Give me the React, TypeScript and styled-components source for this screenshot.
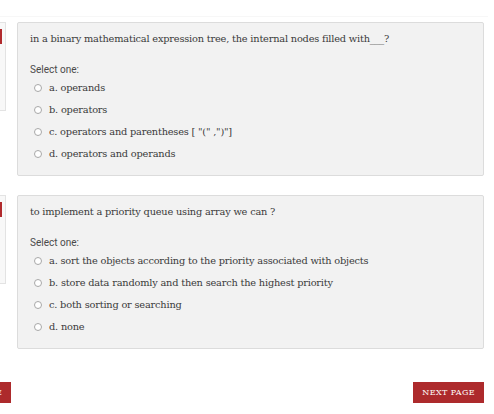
import { FC } from 'react'
import styled, { createGlobalStyle } from 'styled-components'

const GlobalStyle = createGlobalStyle`
  html, body {
    margin: 0;
    padding: 0;
    background: #fff;
  }
`

type Question = {
  id: string
  text: string
  options: string[]
}

const questions: Question[] = [
  {
    id: 'q1',
    text: 'in a binary mathematical expression tree, the internal nodes filled with___?',
    options: [
      'a. operands',
      'b. operators',
      'c. operators and parentheses [ "(" ,")"]',
      'd. operators and operands',
    ],
  },
  {
    id: 'q2',
    text: 'to implement a priority queue using array we can ?',
    options: [
      'a. sort the objects according to the priority associated with objects',
      'b. store data randomly and then search the highest priority',
      'c. both sorting or searching',
      'd. none',
    ],
  },
]

const QuestionBlock: FC<{ question: Question }> = ({ question }) => (
  <Block>
    <InfoBox>
      <InfoMarker />
    </InfoBox>
    <Card>
      <QuestionText>{question.text}</QuestionText>
      <Prompt>Select one:</Prompt>
      <OptionList>
        {question.options.map((option) => (
          <OptionRow key={option}>
            <Radio />
            <OptionLabel>{option}</OptionLabel>
          </OptionRow>
        ))}
      </OptionList>
    </Card>
  </Block>
)

export default function App() {
  return (
    <>
      <GlobalStyle />
      <Page>
        <TopRule />
        <Questions>
          {questions.map((q) => (
            <QuestionBlock key={q.id} question={q} />
          ))}
        </Questions>
        <Nav>
          <PrevButton>PREVIOUS PAGE</PrevButton>
          <NavButton>NEXT PAGE</NavButton>
        </Nav>
      </Page>
    </>
  )
}

const Page = styled.div`
  width: 494px;
  height: 414px;
  overflow: hidden;
  padding-top: 16px;
  box-sizing: border-box;
`

const TopRule = styled.div`
  height: 1px;
  margin-right: 6px;
  background-color: #f7f7f7;
  margin-bottom: 5px;
`

const Questions = styled.div`
  display: flex;
  flex-direction: column;
  gap: 19px;
`

const Block = styled.div`
  display: flex;
  align-items: flex-start;
  gap: 11px;
`

const InfoBox = styled.div`
  width: 6px;
  height: 89px;
  border: 1px solid #e3e3e3;
  border-left: none;
  background-color: #f8f8f8;
  padding-top: 6px;
  box-sizing: border-box;
`

const InfoMarker = styled.div`
  width: 2px;
  height: 15px;
  background-color: #b12a2d;
`

const Card = styled.div`
  width: 467px;
  height: 154px;
  box-sizing: border-box;
  border: 1px solid #dcdcdc;
  border-radius: 2px;
  background-color: #f2f2f2;
  padding: 9px 12px 0;
`

const QuestionText = styled.div`
  font-family: 'DejaVu Serif', serif;
  font-size: 9.8px;
  line-height: 14px;
  color: #3a3a3a;
  letter-spacing: -0.2px;
`

const Prompt = styled.div`
  margin-top: 18px;
  font-family: Roboto, 'Liberation Sans', sans-serif;
  font-size: 10px;
  line-height: 12px;
  color: #4a4a4a;
`

const OptionList = styled.div`
  display: flex;
  flex-direction: column;
  gap: 8px;
  margin-top: 5px;
`

const OptionRow = styled.div`
  display: flex;
  align-items: center;
  gap: 7px;
  padding-left: 4px;
  height: 14px;
`

const Radio = styled.span`
  width: 6px;
  height: 6px;
  border-radius: 50%;
  border: 1px solid #a8a8a8;
  background-color: #fff;
  flex-shrink: 0;
`

const OptionLabel = styled.span`
  font-family: 'DejaVu Serif', serif;
  font-size: 9.8px;
  line-height: 14px;
  color: #3a3a3a;
  letter-spacing: -0.2px;
`

const Nav = styled.div`
  display: flex;
  justify-content: space-between;
  align-items: center;
  margin-top: 33px;
  padding-right: 10px;
`

const NavButton = styled.div`
  height: 21px;
  display: flex;
  align-items: center;
  padding: 0 9px;
  background-color: #ad2a2c;
  color: #fff;
  font-family: 'DejaVu Serif', serif;
  font-size: 8px;
  letter-spacing: 0.4px;
`

const PrevButton = styled(NavButton)`
  margin-left: -82px;
`
